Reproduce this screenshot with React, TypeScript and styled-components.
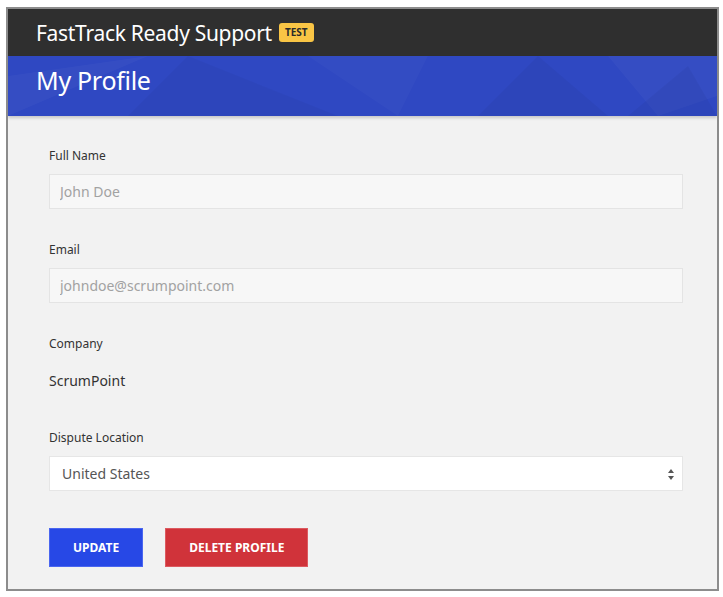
import styled, { createGlobalStyle } from "styled-components";

const GlobalStyle = createGlobalStyle`
  html, body {
    margin: 0;
    padding: 0;
    background: #ffffff;
  }
  body {
    font-family: "Noto Sans", "Open Sans", Arial, sans-serif;
  }
`;

const Frame = styled.div`
  margin: 7px 0 0 6px;
  width: 713px;
  height: 584px;
  box-sizing: border-box;
  border: 2px solid #8c8c8c;
  background: #f2f2f2;
  display: flex;
  flex-direction: column;
  overflow: hidden;
`;

const TopBar = styled.header`
  height: 47px;
  background: #2f2f2f;
  display: flex;
  align-items: center;
  gap: 7px;
  padding-left: 28px;
`;

const Brand = styled.span`
  color: #ffffff;
  font-size: 21px;
  letter-spacing: -0.3px;
`;

const Badge = styled.span`
  background: #f9c545;
  color: #2a2a2a;
  font-size: 10px;
  font-weight: 700;
  padding: 2px 6px;
  border-radius: 3px;
  line-height: 15px;
`;

const Banner = styled.div`
  position: relative;
  height: 60px;
  box-sizing: border-box;
  background: #2f48c2;
  display: flex;
  align-items: flex-start;
  padding: 7px 0 0 28px;
  box-shadow: 0 2px 3px rgba(0, 0, 0, 0.18);
  z-index: 1;
`;

const BannerArt = styled.svg`
  position: absolute;
  inset: 0;
  width: 100%;
  height: 100%;
`;

const PageTitle = styled.h1`
  position: relative;
  margin: 0;
  color: #ffffff;
  font-size: 25px;
  line-height: 34px;
  font-weight: 400;
  letter-spacing: -0.3px;
`;

const Form = styled.form`
  flex: 1;
  padding: 31px 34px 0 41px;
  display: flex;
  flex-direction: column;
`;

const Field = styled.div`
  display: flex;
  flex-direction: column;
  gap: 9px;
  margin-bottom: 32px;
`;

const Label = styled.label`
  font-size: 12px;
  color: #333333;
  line-height: 18px;
`;

const Input = styled.input`
  height: 35px;
  box-sizing: border-box;
  border: 1px solid #e4e4e4;
  background: #f7f7f7;
  padding: 0 10px;
  font-family: inherit;
  font-size: 14px;
  color: #555555;
  outline: none;
  &::placeholder {
    color: #a2a2a2;
  }
`;

const Value = styled.div`
  font-size: 14px;
  color: #333333;
  line-height: 22px;
  padding: 8px 0 5px;
`;

const SelectWrap = styled.div`
  position: relative;
  height: 35px;
  box-sizing: border-box;
  border: 1px solid #e6e6e6;
  background: #ffffff;
  display: flex;
  align-items: center;
  padding: 0 12px;
  font-size: 14px;
  color: #555555;
`;

const Arrows = styled.svg`
  position: absolute;
  right: 7px;
  top: 11px;
`;

const Actions = styled.div`
  display: flex;
  gap: 22px;
  margin-top: 5px;
`;

const Button = styled.button<{ $tone: "blue" | "red" }>`
  height: 39px;
  border: 1px solid ${(p) => (p.$tone === "blue" ? "#4a66f0" : "#dc5a60")};
  background: ${(p) => (p.$tone === "blue" ? "#2748e6" : "#d0333a")};
  color: #ffffff;
  font-family: inherit;
  font-size: 12px;
  font-weight: 700;
  padding: 0 23px;
  cursor: pointer;
`;

export default function App() {
  return (
    <>
      <GlobalStyle />
      <Frame>
        <TopBar>
          <Brand>FastTrack Ready Support</Brand>
          <Badge>TEST</Badge>
        </TopBar>
        <Banner>
          <BannerArt viewBox="0 0 709 60" preserveAspectRatio="none">
            <polygon points="0,20 140,0 0,60" fill="#ffffff" opacity="0.03" />
            <polygon points="180,0 330,60 120,60" fill="#000000" opacity="0.03" />
            <polygon points="300,0 420,0 390,60" fill="#ffffff" opacity="0.025" />
            <polygon points="530,0 600,60 470,60" fill="#000000" opacity="0.04" />
            <polygon points="600,0 709,0 709,40 650,60" fill="#ffffff" opacity="0.03" />
            <polygon points="680,10 709,60 620,60" fill="#000000" opacity="0.04" />
          </BannerArt>
          <PageTitle>My Profile</PageTitle>
        </Banner>
        <Form onSubmit={(e) => e.preventDefault()}>
          <Field>
            <Label>Full Name</Label>
            <Input placeholder="John Doe" />
          </Field>
          <Field>
            <Label>Email</Label>
            <Input placeholder="johndoe@scrumpoint.com" />
          </Field>
          <Field>
            <Label>Company</Label>
            <Value>ScrumPoint</Value>
          </Field>
          <Field>
            <Label>Dispute Location</Label>
            <SelectWrap>
              United States
              <Arrows width="8" height="13" viewBox="0 0 8 13">
                <path d="M4 1 L7 5 L1 5 Z" fill="#555" />
                <path d="M4 12 L7 8 L1 8 Z" fill="#555" />
              </Arrows>
            </SelectWrap>
          </Field>
          <Actions>
            <Button $tone="blue" type="button">UPDATE</Button>
            <Button $tone="red" type="button">DELETE PROFILE</Button>
          </Actions>
        </Form>
      </Frame>
    </>
  );
}
